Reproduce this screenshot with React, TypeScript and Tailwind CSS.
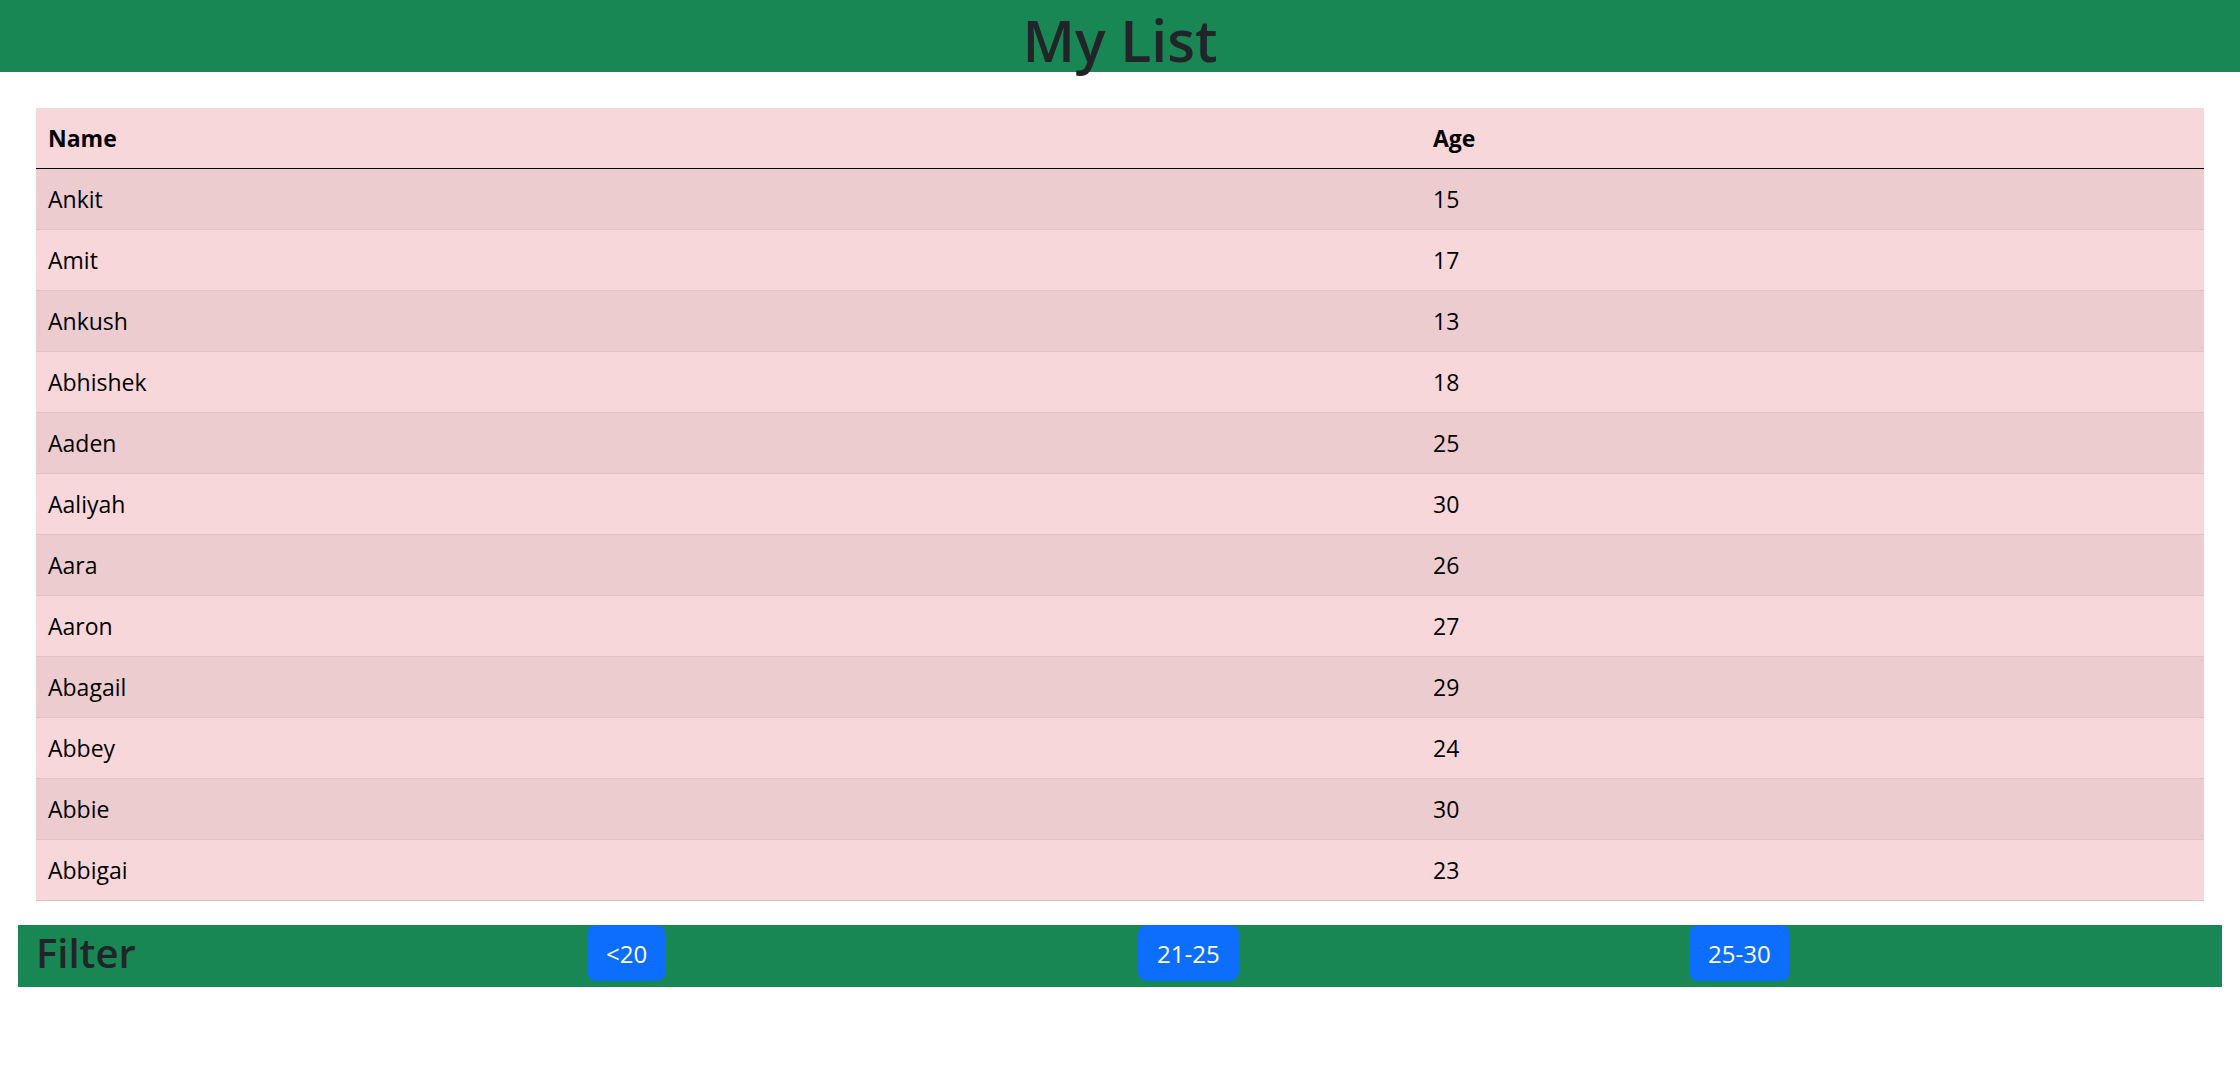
import React from 'react'

const people = [
  { name: 'Ankit', age: 15 },
  { name: 'Amit', age: 17 },
  { name: 'Ankush', age: 13 },
  { name: 'Abhishek', age: 18 },
  { name: 'Aaden', age: 25 },
  { name: 'Aaliyah', age: 30 },
  { name: 'Aara', age: 26 },
  { name: 'Aaron', age: 27 },
  { name: 'Abagail', age: 29 },
  { name: 'Abbey', age: 24 },
  { name: 'Abbie', age: 30 },
  { name: 'Abbigai', age: 23 },
]

const filters = ['<20', '21-25', '25-30']

const App = () => {
  return (
    <div className="min-h-screen bg-white font-['Open_Sans',sans-serif] text-[#212529]">
      {/* header */}
      <div className="h-[72px] bg-[#198754] text-center">
        <h1 className="text-[57px] font-semibold leading-[80px] text-[#212529]">My List</h1>
      </div>

      <div className="px-[36px] pt-[36px]">
        <table className="w-full border-separate border-spacing-0 text-[23px] text-black">
          <thead>
            <tr className="bg-[#f8d7da]">
              <th className="h-[61px] w-[1385px] border-b border-black px-[12px] text-left align-middle font-bold">Name</th>
              <th className="h-[61px] border-b border-black px-[12px] text-left align-middle font-bold">Age</th>
            </tr>
          </thead>
          <tbody>
            {people.map((p, i) => (
              <tr key={p.name} className={i % 2 === 0 ? 'bg-[#eccccf]' : 'bg-[#f8d7da]'}>
                <td className="h-[61px] border-b border-[#dfc2c4] px-[12px] align-middle">{p.name}</td>
                <td className="h-[61px] border-b border-[#dfc2c4] px-[12px] align-middle">{p.age}</td>
              </tr>
            ))}
          </tbody>
        </table>
      </div>

      {/* filter bar */}
      <div className="mx-[18px] mt-[24px] grid h-[62px] grid-cols-4 bg-[#198754]">
        <div className="px-[18px]">
          <h2 className="text-[40px] font-semibold leading-[56px] text-[#212529]">Filter</h2>
        </div>
        {filters.map((f) => (
          <div key={f} className="px-[18px]">
            <button className="h-[56px] rounded-[9px] border border-[#0d6efd] bg-[#0d6efd] px-[18px] pt-[2px] text-[24px] leading-[36px] text-white">
              {f}
            </button>
          </div>
        ))}
      </div>
    </div>
  )
}

export default App
